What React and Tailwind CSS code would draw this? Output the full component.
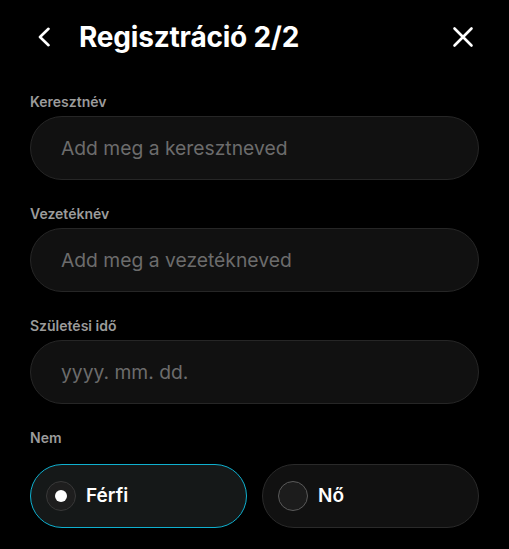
import React from "react";

function Field({ label, placeholder }) {
  return (
    <div className="flex flex-col">
      <div className="text-[14px] leading-[20px] font-semibold text-[#9b9b9b] mb-[4px]">{label}</div>
      <div className="h-[64px] rounded-full border border-[#262626] bg-[#111111] flex items-center pl-[30px]">
        <span className="text-[19.3px] text-[#6c6c6c]">{placeholder}</span>
      </div>
    </div>
  );
}

export default function App() {
  return (
    <div className="w-[509px] min-h-[549px] bg-black text-white" style={{ fontFamily: "Inter, 'Noto Sans', sans-serif" }}>
      <header className="flex items-center h-[74px] pl-[37px] pr-[35px]">
        <svg width="14" height="20" viewBox="0 0 14 20" fill="none">
          <path d="M11.5 1.8 L3 10 L11.5 18.2" stroke="white" strokeWidth="2.6" strokeLinecap="round" strokeLinejoin="round" />
        </svg>
        <h1 className="ml-[28px] text-[28px] leading-[34px] font-bold tracking-[-0.2px]">Regisztráció 2/2</h1>
        <svg className="ml-auto" width="22" height="22" viewBox="0 0 22 22" fill="none">
          <path d="M2.5 2.5 L19.5 19.5 M19.5 2.5 L2.5 19.5" stroke="white" strokeWidth="2.6" strokeLinecap="round" />
        </svg>
      </header>
      <main className="px-[30px] pt-[18px] flex flex-col gap-[24px]">
        <Field label="Keresztnév" placeholder="Add meg a keresztneved" />
        <Field label="Vezetéknév" placeholder="Add meg a vezetékneved" />
        <Field label="Születési idő" placeholder="yyyy. mm. dd." />
        <div className="flex flex-col">
          <div className="text-[14px] leading-[20px] font-semibold text-[#9b9b9b] mb-[16px]">Nem</div>
          <div className="flex gap-[15px]">
            <button className="flex-1 h-[64px] rounded-full border border-[#0fb0cf] bg-[#151818] flex items-center pl-[15px] gap-[10px]">
              <span className="w-[30px] h-[30px] rounded-full border border-[#383838] bg-[#1e1e1e] flex items-center justify-center">
                <span className="w-[12px] h-[12px] rounded-full bg-white" />
              </span>
              <span className="text-[19px] font-semibold text-white">Férfi</span>
            </button>
            <button className="flex-1 h-[64px] rounded-full border border-[#2a2a2a] bg-[#111111] flex items-center pl-[15px] gap-[10px]">
              <span className="w-[30px] h-[30px] rounded-full border border-[#5a5a5a] bg-[#1c1c1c]" />
              <span className="text-[19px] font-semibold text-white">Nő</span>
            </button>
          </div>
        </div>
      </main>
    </div>
  );
}
